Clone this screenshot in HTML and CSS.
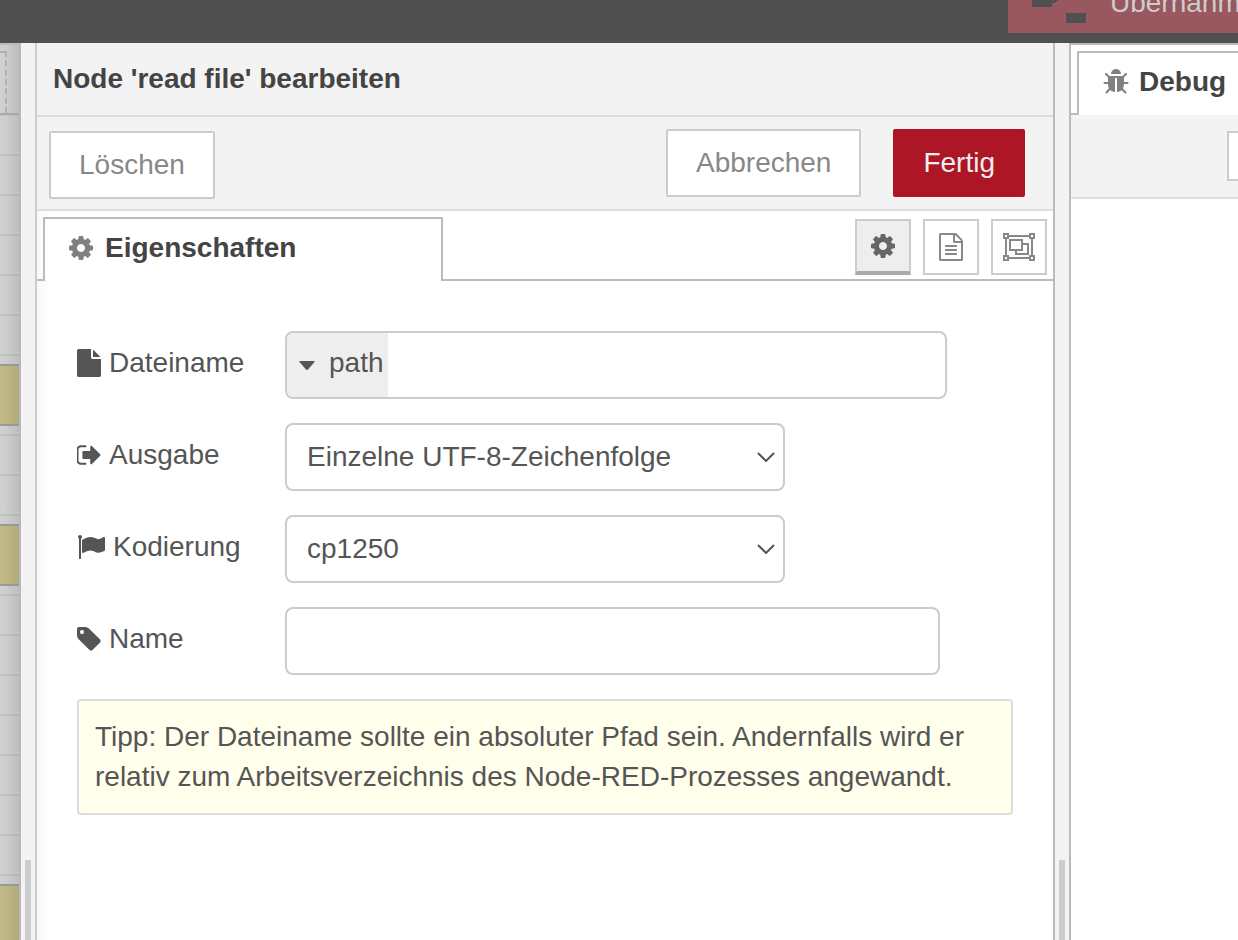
FILE: index.html
```html
<!DOCTYPE html>
<html lang="de">
<head>
<meta charset="utf-8">
<title>Node-RED</title>
<link rel="stylesheet" href="styles.css">
</head>
<body>
<svg class="sprite" aria-hidden="true">
  <symbol id="cog" viewBox="128 0 1536 1792"><path d="M1152 896q0-106-75-181t-181-75-181 75-75 181 75 181 181 75 181-75 75-181zm512-109v222q0 12-8 23t-20 13l-185 28q-19 54-39 91 35 50 107 138 10 12 10 25t-9 23q-27 37-99 108t-94 71q-12 0-26-9l-138-108q-44 23-91 38-16 136-29 186-7 28-36 28h-222q-14 0-24.500-8.500t-11.500-21.500l-28-184q-49-16-90-37l-141 107q-10 9-25 9-14 0-25-11-126-114-165-168-7-10-7-23 0-12 8-23 15-21 51-66.500t54-70.500q-27-50-41-99l-183-27q-13-2-21-12.500t-8-23.500v-222q0-12 8-23t19-13l186-28q14-46 39-92-40-57-107-138-10-12-10-24 0-10 9-23 26-36 98.500-107.500t94.500-71.500q13 0 26 10l138 107q44-23 91-38 16-136 29-186 7-28 36-28h222q14 0 24.500 8.500t11.500 21.500l28 184q49 16 90 37l142-107q9-9 24-9 13 0 25 10 129 119 165 170 7 8 7 22 0 12-8 23-15 21-51 66.500t-54 70.500q26 50 41 98l183 28q13 2 21 12.500t8 23.500z"/></symbol>
</svg>

<header class="topbar">
  <button class="deploy" type="button">
    <svg class="deploy-icon" viewBox="0 0 54 40" aria-hidden="true"><path d="M0 14h20v10H0zM34 0h20v10H34zM34 30h20v10H34z" fill="#505050"/><path d="M20 19c8 0 6-14 14-14" fill="none" stroke="#505050" stroke-width="3"/></svg>
    <span>Übernahme (deploy)</span>
  </button>
</header>

<div class="main">
  <div class="workspace" aria-hidden="true">
    <div class="workspace-tabs"><div class="workspace-tab"></div></div>
    <div class="canvas">
      <div class="node node-a"></div>
      <div class="node node-b"></div>
      <div class="node node-c"></div>
    </div>
  </div>
  <div class="separator separator-left"><div class="grip"></div></div>

  <main class="tray">
    <h1 class="tray-title">Node 'read file' bearbeiten</h1>
    <div class="tray-toolbar">
      <button class="btn btn-delete" type="button">Löschen</button>
      <div class="tray-actions">
        <button class="btn" type="button">Abbrechen</button>
        <button class="btn btn-primary" type="button">Fertig</button>
      </div>
    </div>
    <div class="tabbar">
      <div class="tab tab-properties"><svg class="icon icon-24" aria-hidden="true"><use href="#cog"/></svg><span>Eigenschaften</span></div>
      <div class="tab-buttons">
        <button class="tab-button active" type="button" aria-label="Eigenschaften"><svg class="icon icon-24" aria-hidden="true"><use href="#cog"/></svg></button>
        <button class="tab-button" type="button" aria-label="Beschreibung"><svg class="icon icon-24" viewBox="128 0 1536 1792" aria-hidden="true"><path d="M1596 380q28 28 48 76t20 88v1152q0 40-28 68t-68 28h-1344q-40 0-68-28t-28-68v-1600q0-40 28-68t68-28h896q40 0 88 20t76 48zm-444-244v376h376q-10-29-22-41l-313-313q-12-12-41-22zm384 1528v-1024h-416q-40 0-68-28t-28-68v-416h-768v1536h1280zm-1024-864q0-14 9-23t23-9h704q14 0 23 9t9 23v64q0 14-9 23t-23 9h-704q-14 0-23-9t-9-23v-64zm736 224q14 0 23 9t9 23v64q0 14-9 23t-23 9h-704q-14 0-23-9t-9-23v-64q0-14 9-23t23-9h704zm0 256q14 0 23 9t9 23v64q0 14-9 23t-23 9h-704q-14 0-23-9t-9-23v-64q0-14 9-23t23-9h704z"/></svg></button>
        <button class="tab-button" type="button" aria-label="Darstellung"><svg class="icon icon-32" viewBox="0 0 32 28" aria-hidden="true"><g fill="none" stroke="#888" stroke-width="2"><path d="M6 3h20M6 25h20M3 6v16M29 6v16"/><path d="M1 1h4v4H1zM27 1h4v4h-4zM1 23h4v4H1zM27 23h4v4h-4z"/><path d="M7 7h12v10H7z"/><path d="M19 11h6v10H13v-4"/></g></svg></button>
      </div>
    </div>

    <form class="form">
      <div class="form-row">
        <label for="filename"><svg class="icon icon-24" viewBox="128 0 1536 1792" aria-hidden="true"><path d="M1152 512v-472q22 14 36 28l408 408q14 14 28 36h-472zm-128 32q0 40 28 68t68 28h544v1056q0 40-28 68t-68 28h-1344q-40 0-68-28t-28-68v-1600q0-40 28-68t68-28h800v544z"/></svg>Dateiname</label>
        <div class="typed-input">
          <button class="type-select" type="button"><svg class="caret" viewBox="0 0 16 9" aria-hidden="true"><path d="M1 0h14q1 0 .5 1L9 8.500q-1 .8-2 0L.5 1Q0 0 1 0z"/></svg><span>path</span></button>
          <input id="filename" type="text">
        </div>
      </div>
      <div class="form-row">
        <label for="output"><svg class="icon icon-24" viewBox="96 0 1568 1792" aria-hidden="true"><path d="M704 1440q0 4 1 20t.5 26.500-3 23.500-10 19.500-20.500 6.500h-320q-119 0-203.500-84.500t-84.500-203.500v-704q0-119 84.500-203.500t203.500-84.500h320q13 0 22.500 9.500t9.500 22.500q0 4 1 20t.5 26.500-3 23.500-10 19.500-20.500 6.500h-320q-66 0-113 47t-47 113v704q0 66 47 113t113 47h312l11.500 1 11.500 3 8 5.500 7 9 2 13.500zm928-544q0 26-19 45l-544 544q-19 19-45 19t-45-19-19-45v-288h-448q-26 0-45-19t-19-45v-384q0-26 19-45t45-19h448v-288q0-26 19-45t45-19 45 19l544 544q19 19 19 45z"/></svg>Ausgabe</label>
        <div class="select">
          <select id="output"><option>Einzelne UTF-8-Zeichenfolge</option></select>
          <svg class="chevron" viewBox="0 0 18 10" aria-hidden="true"><path d="M1 1l8 8 8-8"/></svg>
        </div>
      </div>
      <div class="form-row">
        <label for="encoding"><svg class="icon icon-28" viewBox="0 0 1792 1792" aria-hidden="true"><path d="M320 256q0 72-64 110v1266q0 13-9.500 22.500t-22.500 9.500h-64q-13 0-22.500-9.500t-9.500-22.500v-1266q-64-38-64-110 0-53 37.500-90.500t90.500-37.500 90.500 37.500 37.500 90.500zm1472 64v763q0 25-12.500 38.500t-39.500 27.500q-215 116-369 116-61 0-123.500-22t-108.500-48-115.500-48-142.500-22q-192 0-464 146-17 9-33 9-26 0-45-19t-19-45v-742q0-32 31-55 21-14 79-43 236-120 421-120 107 0 200 29t219 88q38 19 88 19 54 0 117.500-21t110-47 88-47 54.500-21q26 0 45 19t19 45z"/></svg>Kodierung</label>
        <div class="select">
          <select id="encoding"><option>cp1250</option></select>
          <svg class="chevron" viewBox="0 0 18 10" aria-hidden="true"><path d="M1 1l8 8 8-8"/></svg>
        </div>
      </div>
      <div class="form-row">
        <label for="name"><svg class="icon icon-24" viewBox="128 0 1536 1792" aria-hidden="true"><path d="M576 448q0-53-37.500-90.500t-90.500-37.500-90.500 37.500-37.500 90.500 37.500 90.500 90.500 37.500 90.500-37.500 37.500-90.500zm1067 576q0 53-37 90l-491 492q-39 37-91 37-53 0-90-37l-715-716q-38-37-64.500-101t-26.500-117v-416q0-52 38-90t90-38h416q53 0 117 26.500t102 64.500l715 714q37 39 37 91z"/></svg>Name</label>
        <input class="text-input" id="name" type="text">
      </div>
      <p class="tip">Tipp: Der Dateiname sollte ein absoluter Pfad sein. Andernfalls wird er relativ zum Arbeitsverzeichnis des Node-RED-Prozesses angewandt.</p>
    </form>
  </main>

  <div class="separator separator-right"><div class="grip"></div></div>
  <aside class="sidebar">
    <div class="tabbar">
      <div class="tab tab-debug"><svg class="icon icon-26" viewBox="64 0 1664 1792" aria-hidden="true"><path d="M1696 960q0 26-19 45t-45 19h-224q0 171-67 290l208 209q19 19 19 45t-19 45q-18 19-45 19t-45-19l-198-197q-5 5-15 13t-42 28.500-65 36.500-82 29-97 13v-896h-128v896q-51 0-101.500-13.500t-87-33-66-39-43.500-32.500l-15-14-183 207q-20 21-48 21-24 0-43-16-19-18-20.500-44.500t15.500-46.500l202-227q-58-114-58-274h-224q-26 0-45-19t-19-45 19-45 45-19h224v-294l-173-173q-19-19-19-45t19-45 45-19 45 19l173 173h844l173-173q19-19 45-19t45 19 19 45-19 45l-173 173v294h224q26 0 45 19t19 45zm-480-576h-640q0-133 93.500-226.500t226.500-93.500 226.500 93.500 93.500 226.500z"/></svg><span>Debug</span></div>
    </div>
    <div class="sidebar-toolbar"><button class="filter" type="button" aria-label="Filter"></button></div>
  </aside>
</div>
</body>
</html>
```

FILE: styles.css
```css
* { box-sizing: border-box; }

body {
  margin: 0;
  height: 100vh;
  display: flex;
  flex-direction: column;
  overflow: hidden;
  background: #fff;
  color: #555;
  font: 28px/40px "Liberation Sans", Arial, sans-serif;
}

button, input, select { font: inherit; color: inherit; margin: 0; }
.sprite { display: none; }

.icon { flex: none; height: 28px; fill: currentColor; }
.icon-24 { width: 24px; }
.icon-26 { width: 26px; }
.icon-28 { width: 28px; }
.icon-32 { width: 32px; }

/* top bar */
.topbar {
  flex: none;
  height: 43px;
  padding-bottom: 10px;
  display: flex;
  justify-content: flex-end;
  align-items: flex-end;
  overflow: hidden;
  background: #505050;
}
.deploy {
  flex: none;
  width: 230px;
  height: 60px;
  padding: 0 0 0 24px;
  display: flex;
  align-items: center;
  gap: 24px;
  overflow: hidden;
  white-space: nowrap;
  border: 0;
  background: #99575f;
  color: #ccc;
}
.deploy-icon { flex: none; width: 54px; height: 40px; }

.main { flex: 1; display: flex; min-height: 0; }

/* dimmed workspace */
.workspace {
  flex: none;
  width: 21px;
  display: flex;
  flex-direction: column;
  overflow: hidden;
  border-right: 2px solid #b9b9b9;
  background: linear-gradient(to right, #d0d0d0 20%, #bebebe);
}
.workspace-tabs {
  height: 72px;
  padding-top: 6px;
  border-top: 2px solid #bbb;
  border-bottom: 2px solid #aaa;
}
.workspace-tab {
  width: 7px;
  height: 62px;
  border: 2px dashed #b0b0b0;
  border-width: 2px 2px 0 0;
}
.canvas {
  position: relative;
  flex: 1;
  background: repeating-linear-gradient(transparent 0 39px, rgba(0, 0, 0, .06) 39px 41px, transparent 41px 40px);
  background: linear-gradient(rgba(0, 0, 0, .06) 2px, transparent 2px) 0 39px / 100% 40px;
}
.node {
  position: absolute;
  left: 0;
  right: 0;
  height: 62px;
  border: 2px solid #999;
  border-width: 2px 0;
  background: linear-gradient(to right, #c1ba85 20%, #b0a97a);
}
.node-a { top: 249px; }
.node-b { top: 409px; }
.node-c { top: 769px; }

.separator {
  flex: none;
  display: flex;
  align-items: flex-end;
  justify-content: center;
  background: #f3f3f3;
}
.separator-left { width: 16px; border-right: 2px solid #ccc; }
.separator-right { width: 18px; border: 2px solid #bbb; border-width: 0 2px; }
.grip { width: 6px; height: 80px; background: #ccc; }

/* edit tray */
.tray {
  flex: 1;
  min-width: 0;
  background: linear-gradient(to right, #f9f9f9, #fff 14px);
}
.tray-title {
  margin: 0;
  padding: 16px;
  border-bottom: 2px solid #ddd;
  background: #f3f3f3;
  color: #444;
  font-size: 28px;
  line-height: 40px;
}
.tray-toolbar {
  display: flex;
  justify-content: space-between;
  height: 94px;
  padding: 12px 28px 10px 12px;
  border-bottom: 2px solid #ddd;
  background: #f3f3f3;
}
.tray-actions { display: flex; align-items: flex-start; gap: 32px; }
.btn {
  height: 68px;
  padding: 0 28px;
  border: 2px solid #ccc;
  border-radius: 2px;
  background: #fff;
  color: #888;
}
.btn-delete { align-self: flex-end; }
.btn-primary { border-color: #ad1625; background: #ad1625; color: #eee; }

.tabbar {
  display: flex;
  align-items: flex-end;
  height: 70px;
  padding: 0 6px;
  border-bottom: 2px solid #bbb;
}
.tab {
  flex: none;
  height: 64px;
  margin-bottom: -2px;
  padding: 0 24px 4px;
  display: flex;
  align-items: center;
  gap: 12px;
  border: 2px solid #bbb;
  border-bottom: 0;
  background: #fff;
  color: #444;
  font-weight: bold;
}
.tab .icon { color: #808080; }
.tab-properties { width: 400px; }
.tab-debug { width: 200px; padding-right: 0; gap: 10px; }
.tab-buttons { margin-left: auto; padding-bottom: 4px; display: flex; gap: 12px; }
.tab-button {
  width: 56px;
  height: 56px;
  padding: 0;
  display: flex;
  align-items: center;
  justify-content: center;
  border: 2px solid #ccc;
  background: #fff;
  color: #888;
}
.tab-button.active {
  border-bottom: 4px solid #aaa;
  background: #eee;
  color: #666;
}

/* form */
.form {
  display: flex;
  flex-direction: column;
  gap: 24px;
  padding: 50px 40px 40px;
}
.form-row { display: flex; align-items: center; }
.form-row label {
  flex: none;
  width: 208px;
  padding-bottom: 4px;
  display: flex;
  align-items: center;
  gap: 8px;
}
.typed-input, .text-input, .select select {
  height: 68px;
  border: 2px solid #ccc;
  border-radius: 8px;
  background: #fff;
}
.typed-input { width: 662px; display: flex; overflow: hidden; }
.typed-input input { flex: 1; min-width: 0; border: 0; padding: 0 8px; background: none; }
.type-select {
  flex: none;
  padding: 0 4px 4px 12px;
  display: flex;
  align-items: center;
  gap: 14px;
  border: 0;
  background: #eee;
}
.caret { width: 16px; height: 9px; margin-top: 4px; fill: #555; }
.text-input { width: 70%; padding: 0 8px; }
.select { width: 500px; display: grid; align-items: center; }
.select select {
  grid-area: 1 / 1;
  width: 100%;
  padding: 0 40px 0 20px;
  appearance: none;
}
.chevron {
  grid-area: 1 / 1;
  justify-self: end;
  width: 18px;
  height: 10px;
  margin-right: 10px;
  fill: none;
  stroke: #555;
  stroke-width: 2;
  pointer-events: none;
}
.tip {
  margin: 0;
  padding: 16px;
  border: 2px solid #ddd;
  border-radius: 4px;
  background: #ffffec;
}

/* sidebar */
.sidebar {
  flex: none;
  width: 167px;
  overflow: hidden;
  border-top: 2px solid #bbb;
  background: #fff;
}
.sidebar-toolbar {
  display: flex;
  padding: 16px 0 16px 156px;
  border-bottom: 2px solid #ddd;
  background: #f3f3f3;
}
.filter { flex: none; width: 120px; height: 50px; border: 2px solid #ccc; background: #fff; }
```
